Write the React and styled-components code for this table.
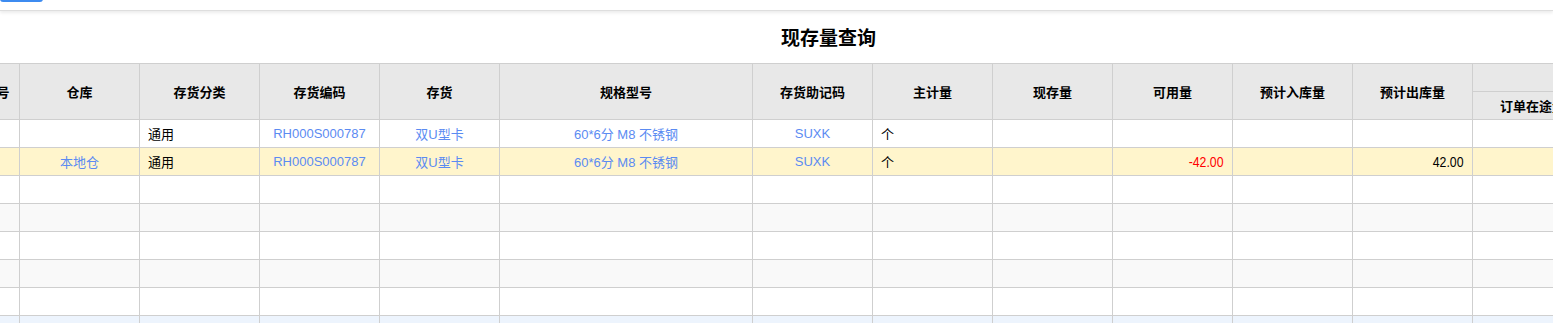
import React from 'react';
import styled, { createGlobalStyle } from 'styled-components';

const GlobalStyle = createGlobalStyle`
  html, body { margin: 0; padding: 0; background: #fff; }
  body {
    font-family: "Liberation Sans", "Noto Sans CJK SC", sans-serif;
    font-size: 13px;
    color: #000;
    overflow: hidden;
  }
`;

const Page = styled.div`
  width: 1553px;
  height: 323px;
  overflow: hidden;
  background: #fff;
`;

const Toolbar = styled.div`
  position: relative;
  z-index: 1;
  display: flow-root;
  height: 10px;
  border-bottom: 1px solid #dedede;
  box-shadow: 0 2px 3px rgba(0, 0, 0, 0.08);
  background: #fff;
`;

const ToolButton = styled.button`
  display: block;
  width: 43px;
  height: 30px;
  margin-top: -28px;
  border: none;
  border-radius: 3px;
  background: #3d8bf0;
`;

const TitleBar = styled.div`
  display: flex;
  justify-content: center;
  align-items: center;
  height: 52px;
  padding-left: 104px;
`;

const Title = styled.h1`
  margin: 0;
  font-family: "Noto Sans CJK SC", sans-serif;
  font-size: 19px;
  font-weight: bold;
  line-height: 24px;
`;

const GridViewport = styled.div`
  overflow: hidden;
`;

const Grid = styled.table`
  border-collapse: collapse;
  table-layout: fixed;
  margin-left: -27px;
  width: 1859px;
`;

const HeadCell = styled.th`
  height: 27px;
  padding: 0 4px;
  background: #e8e8e8;
  border: 1px solid #cfcfcf;
  font-family: "Liberation Sans", "Noto Sans CJK SC", sans-serif;
  font-size: 13px;
  font-weight: bold;
  text-align: center;
  vertical-align: middle;
  white-space: nowrap;
  overflow: hidden;
`;

const rowBg = {
  plain: '#ffffff',
  stripe: '#f9f9f9',
  selected: '#fff5cc',
  hover: '#edf4fd',
};

const Row = styled.tr`
  background: ${(p) => rowBg[p.$variant] || '#fff'};
`;

const toneColor = {
  normal: '#000',
  link: '#5b8bf2',
  danger: '#ff0000',
};

const Cell = styled.td`
  height: 27px;
  padding: 0 8px;
  border: 1px solid #cfcfcf;
  font-family: "Liberation Sans", "Noto Sans CJK SC", sans-serif;
  font-size: 13px;
  color: ${(p) => toneColor[p.$tone || 'normal']};
  text-align: ${(p) => p.$align || 'center'};
  vertical-align: middle;
  white-space: nowrap;
  overflow: hidden;
`;

/* numbers use a condensed face (Arial Narrow look) */
const NumText = styled.span`
  display: inline-block;
  font-size: 15px;
  line-height: 16px;
  transform: scaleX(0.82);
  transform-origin: right center;
`;

const columns = [
  { key: 'seq', title: '序号', width: 46 },
  { key: 'wh', title: '仓库', width: 120 },
  { key: 'cat', title: '存货分类', width: 120, align: 'left' },
  { key: 'code', title: '存货编码', width: 120, tone: 'link' },
  { key: 'name', title: '存货', width: 120, tone: 'link' },
  { key: 'spec', title: '规格型号', width: 253, tone: 'link' },
  { key: 'mnem', title: '存货助记码', width: 120, tone: 'link' },
  { key: 'unit', title: '主计量', width: 120, align: 'left' },
  { key: 'stock', title: '现存量', width: 120, align: 'right', num: true },
  { key: 'avail', title: '可用量', width: 120, align: 'right', num: true },
  { key: 'in', title: '预计入库量', width: 120, align: 'right', num: true },
  { key: 'out', title: '预计出库量', width: 120, align: 'right', num: true },
];

const groupCols = [
  { key: 'ord', title: '订单在途量', width: 120 },
  { key: 'pur', title: '采购在途量', width: 120 },
  { key: 'prd', title: '生产在途量', width: 120 },
];

const rows = [
  {
    cat: '通用', code: 'RH000S000787', name: '双U型卡', spec: '60*6分 M8 不锈钢',
    mnem: 'SUXK', unit: '个',
  },
  {
    wh: '本地仓', cat: '通用', code: 'RH000S000787', name: '双U型卡', spec: '60*6分 M8 不锈钢',
    mnem: 'SUXK', unit: '个', avail: '-42.00', out: '42.00',
  },
  {}, {}, {}, {}, {}, {},
];

const variantFor = (i) => {
  if (i === 1) return 'selected';
  if (i === 7) return 'hover';
  return i % 2 === 1 ? 'stripe' : 'plain';
};

export default function App() {
  return (
    <Page>
      <GlobalStyle />
      <Toolbar>
        <ToolButton aria-label="操作" />
      </Toolbar>
      <TitleBar>
        <Title>现存量查询</Title>
      </TitleBar>
      <GridViewport>
        <Grid>
          <colgroup>
            {columns.map((c) => (
              <col key={c.key} style={{ width: c.width }} />
            ))}
            {groupCols.map((c) => (
              <col key={c.key} style={{ width: c.width }} />
            ))}
          </colgroup>
          <thead>
            <tr>
              {columns.map((c) => (
                <HeadCell key={c.key} rowSpan={2}>
                  {c.title}
                </HeadCell>
              ))}
              <HeadCell colSpan={groupCols.length}>在途信息</HeadCell>
            </tr>
            <tr>
              {groupCols.map((c) => (
                <HeadCell key={c.key}>{c.title}</HeadCell>
              ))}
            </tr>
          </thead>
          <tbody>
            {rows.map((r, i) => (
              <Row key={i} $variant={variantFor(i)}>
                {columns.map((c) => {
                  const v = r[c.key] || '';
                  const tone = c.key === 'wh' ? 'link' : c.num && v.startsWith('-') ? 'danger' : c.tone;
                  return (
                    <Cell key={c.key} $align={c.align} $tone={tone}>
                      {c.num && v ? <NumText>{v}</NumText> : v}
                    </Cell>
                  );
                })}
                {groupCols.map((c) => (
                  <Cell key={c.key} $align="right" />
                ))}
              </Row>
            ))}
          </tbody>
        </Grid>
      </GridViewport>
    </Page>
  );
}
